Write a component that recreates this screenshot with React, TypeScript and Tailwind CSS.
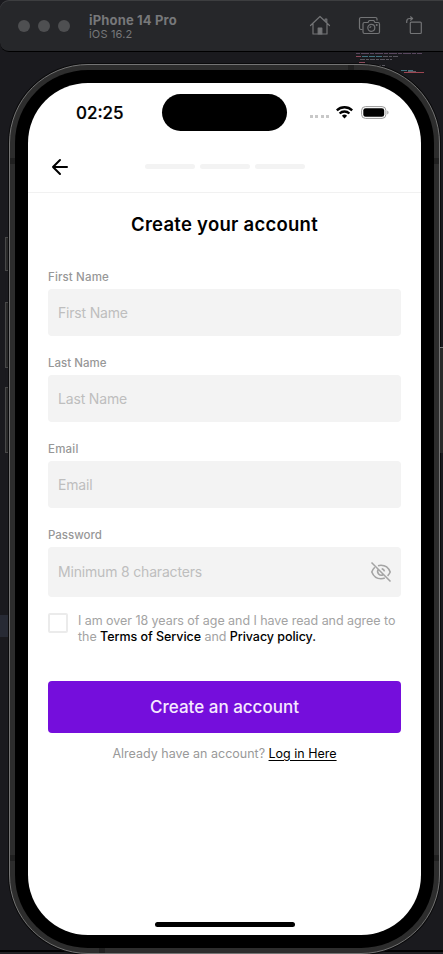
import React from "react";

function SimulatorBar() {
  return (
    <header className="relative z-10 flex h-[52px] items-center rounded-l-[9px] border-b border-black bg-[#26272a] pl-[18px] pr-[19px] shadow-[inset_0_1px_0_#3d3e40]">
      <div className="flex gap-2">
        <span className="size-3 rounded-full bg-[#4e4f51]" />
        <span className="size-3 rounded-full bg-[#4e4f51]" />
        <span className="size-3 rounded-full bg-[#4e4f51]" />
      </div>
      <div className="ml-[19px] flex-1 whitespace-nowrap pt-[3px] text-[#77787a]">
        <div className="text-[13px] leading-[14px] font-bold tracking-[0.012em]">iPhone 14 Pro</div>
        <div className="text-[11px] leading-[14px] tracking-[0.015em]">iOS 16.2</div>
      </div>
      <div className="flex h-6 items-center text-[#737476]">
        <svg width="22" height="22" viewBox="0 0 22 22" fill="none" stroke="currentColor" strokeWidth="1.2" strokeLinejoin="round" strokeLinecap="round">
          <path d="M1.500 10.500 11 1.500l9.500 9M4 8.700V19h14V8.700M16.200 5.900V4h1.600v3.400" />
          <path d="M9.200 19v-6h3.600v6Z" fill="currentColor" />
        </svg>
        <svg className="ml-[27px]" width="23" height="22" viewBox="0 0 23 22" fill="none" stroke="currentColor" strokeWidth="1.200" strokeLinejoin="round">
          <path d="M4.500 14.500H3A1.500 1.500 0 0 1 1.500 13V4A1.500 1.500 0 0 1 3 2.500h14.500A1.500 1.500 0 0 1 19 4v1.500" />
          <path d="M6.500 7.500H10l1.200-2h4.600l1.200 2h3a1.500 1.500 0 0 1 1.500 1.500v8a1.500 1.500 0 0 1-1.500 1.500H6.500A1.500 1.500 0 0 1 5 17V9a1.500 1.500 0 0 1 1.500-1.500Z" />
          <circle cx="13.300" cy="12.800" r="3.500" />
          <path d="M12 13a1.300 1.300 0 0 1 1.300-1.500" />
          <circle cx="18.700" cy="10" r=".4" fill="currentColor" />
        </svg>
        <svg className="ml-[25px]" width="18" height="20" viewBox="0 0 18 20" fill="none" stroke="currentColor" strokeWidth="1.200" strokeLinejoin="round">
          <rect x="4.300" y="6.100" width="11" height="11.400" rx="1" />
          <path d="M.7 7V5.500q0-3 3-3H6M4.300.500l2.300 2-2.300 2" />
        </svg>
      </div>
    </header>
  );
}

function StatusBar() {
  return (
    <div className="flex h-[58px] items-center">
      <div className="ml-12 w-[86px] pt-[2px] text-[17px] leading-none font-medium [-webkit-text-stroke:0.2px_black]">02:25</div>
      <div className="h-[37px] w-[125px] rounded-full bg-black" />
      <div className="ml-[23px] mt-[9px] flex gap-[2.300px]">
        {[0, 1, 2, 3].map((i) => (
          <span key={i} className="h-[3px] w-[3px] bg-[#c8c8c8]" />
        ))}
      </div>
      <svg className="ml-[7.500px]" width="17" height="13" viewBox="0 0 17 13" fill="none" stroke="#000" strokeWidth="2.300">
        <path d="M.8 4.400a11 11 0 0 1 15.400 0M3.600 7.500a7 7 0 0 1 9.800 0" />
        <path d="M5.900 9.800a3.800 3.800 0 0 1 5.200 0l-2.600 2.700Z" fill="#000" stroke="none" />
      </svg>
      <svg className="ml-[7.500px]" width="29" height="13" viewBox="0 0 29 13">
        <rect x=".6" y=".6" width="24.300" height="11.800" rx="3.800" fill="none" stroke="#999" />
        <rect x="2.300" y="2.300" width="20.900" height="8.400" rx="2.300" />
        <path d="M26.300 4.500c1.600.7 1.600 3.300 0 4Z" fill="#999" />
      </svg>
    </div>
  );
}

function EyeOff() {
  return (
    <svg className="-mr-px" width="22" height="22" viewBox="0 0 22 22" fill="none" stroke="#a4a4a4" strokeWidth="1.600">
      <path d="M1.500 1.500 20.500 20.500" />
      <path d="M8 4.700Q9.400 4.200 11 4.200c4.300 0 7.600 2.500 9.200 6.800a11 11 0 0 1-2.600 3.800M4.800 6.200A12 12 0 0 0 1.800 11c1.700 4.300 4.900 6.800 9.200 6.800q2 0 3.800-.7" />
      <path d="M8.300 8.500a3.600 3.600 0 0 0 5 5M11.700 7.600a3.600 3.600 0 0 1 2.800 2.800" />
    </svg>
  );
}

type FieldProps = { label: string; placeholder: string; labelClass: string; inputClass: string; secret?: boolean };

function Field({ label, placeholder, labelClass, inputClass, secret }: FieldProps) {
  return (
    <div>
      <div className={`h-[18px] text-[11.500px] leading-[13px] font-medium text-[#979797] ${labelClass}`}>{label}</div>
      <div className={`flex items-center justify-between rounded bg-[#f3f3f3] px-2.5 ${secret ? "h-[50px]" : "h-[47px]"}`}>
        <span className={`-mt-px text-[14px] text-[#bebebe] ${inputClass}`}>{placeholder}</span>
        {secret && <EyeOff />}
      </div>
    </div>
  );
}

export default function App() {
  return (
    <div className="relative h-[954px] w-[443px] overflow-hidden bg-[#1a1a1e] font-[Inter,sans-serif] text-black">
      <div className="absolute left-0 top-[615px] h-[22px] w-2 bg-[#272a34]" />
      <div className="absolute bottom-0 left-0 h-1 w-full border-t-2 border-black bg-[#202023]" />
      <div className="absolute left-[5px] top-[237px] h-[34px] w-1 border border-r-0 border-[#484848] bg-[#292929]" />
      <div className="absolute left-[5px] top-[302px] h-[66px] w-1 border border-r-0 border-[#484848] bg-[#292929]" />
      <div className="absolute left-[5px] top-[387px] h-[66px] w-1 border border-r-0 border-[#484848] bg-[#292929]" />
      <div className="absolute left-[440px] top-[347px] z-10 h-[106px] w-[3px] border-t border-[#777] bg-[#292929]" />
      <svg className="absolute left-[354px] top-[52px]" width="75" height="24" viewBox="0 0 75 24" fill="none" strokeWidth="1" opacity=".8">
        <path d="M2 1.500h66" stroke="#69536e" strokeDasharray="4 1 8 1" />
        <path d="M2 4.500h5M8 7.500h2M5 10.500h6" stroke="#a9576b" />
        <path d="M8 4.500h20M47 18.500h12" stroke="#4c8998" strokeDasharray="6 1" />
        <path d="M29 4.500h16M6 7.500h32M8 13.500h23" stroke="#68666f" strokeDasharray="5 1 3 1" />
        <path d="M54 19.500h8" stroke="#747078" />
        <path d="M50 20.500h20" stroke="#c05260" />
      </svg>

      <SimulatorBar />

      <main className="relative ml-[9px] mt-3 h-[890px] w-[431px] rounded-[79px] border border-[#747474] bg-[#2d2d2d] p-[5px] shadow-[0_0_0_1px_#0b0b0c]">
        <div className="absolute left-0 top-[93px] h-[6px] w-[5px] bg-[#202020]" />
        <div className="absolute right-0 top-[93px] h-[6px] w-[5px] bg-[#202020]" />
        <div className="absolute left-0 top-[790px] h-[6px] w-[5px] bg-[#202020]" />
        <div className="absolute right-0 top-[790px] h-[6px] w-[5px] bg-[#202020]" />
        <div className="absolute right-[85px] top-0 h-[5px] w-[6px] bg-[#202020]" />
        <div className="absolute bottom-0 left-[89px] h-[5px] w-[6px] bg-[#202020]" />
        <div className="h-[878px] rounded-[73px] bg-black p-[13px]">
          <div className="flex h-[852px] flex-col overflow-hidden rounded-[60px] bg-white">
            <StatusBar />
            <nav className="flex h-[52px] items-center border-b border-[#f1f1f1]">
              <svg className="ml-[23px]" width="18" height="18" viewBox="0 0 18 18" fill="none" stroke="#000" strokeWidth="2" strokeLinecap="round" strokeLinejoin="round">
                <path d="M16 9H2M9 2 2 9l7 7" />
              </svg>
              <div className="ml-[75.500px] flex gap-[5px]">
                <span className="h-[5px] w-[50px] rounded-sm bg-[#f3f3f3]" />
                <span className="h-[5px] w-[50px] rounded-sm bg-[#f3f3f3]" />
                <span className="h-[5px] w-[50px] rounded-sm bg-[#f3f3f3]" />
              </div>
            </nav>

            <form className="flex flex-col px-5">
              <h1 className="mt-[19px] text-center text-[18.500px] leading-6 font-semibold tracking-[0.014em]">Create your account</h1>
              <div className="mt-[35px] flex flex-col gap-[21px]">
                <Field label="First Name" placeholder="First Name" labelClass="tracking-[0.012em]" inputClass="tracking-[-0.014em]" />
                <Field label="Last Name" placeholder="Last Name" labelClass="" inputClass="tracking-[-0.012em]" />
                <Field label="Email" placeholder="Email" labelClass="tracking-[0.02em]" inputClass="tracking-[-0.014em]" />
                <Field label="Password" placeholder="Minimum 8 characters" labelClass="" inputClass="tracking-[-0.013em]" secret />
              </div>
              <div className="mt-4 flex gap-2.5">
                <span className="size-5 shrink-0 rounded-[2px] border-2 border-[#ebebeb]" />
                <p className="whitespace-nowrap text-[12.500px] leading-[15.500px] tracking-[-0.004em] text-[#a3a3a3]">
                  I am over 18 years of age and I have read and agree to<br />
                  the <span className="font-medium text-black">Terms of Service</span> and <span className="font-medium text-black">Privacy policy.</span>
                </p>
              </div>
              <button type="button" className="mt-[37px] h-[52px] rounded bg-[#750edc] pt-px text-[17px] font-medium text-[#f6e9ff]">Create an account</button>
              <p className="mt-3 text-center text-[12.500px] leading-[17px] text-[#999]">
                Already have an account? <a className="text-black underline underline-offset-2">Log in Here</a>
              </p>
            </form>
            <div className="mx-auto mb-2 mt-auto h-[5px] w-[140px] rounded-full bg-black" />
          </div>
        </div>
      </main>
    </div>
  );
}
